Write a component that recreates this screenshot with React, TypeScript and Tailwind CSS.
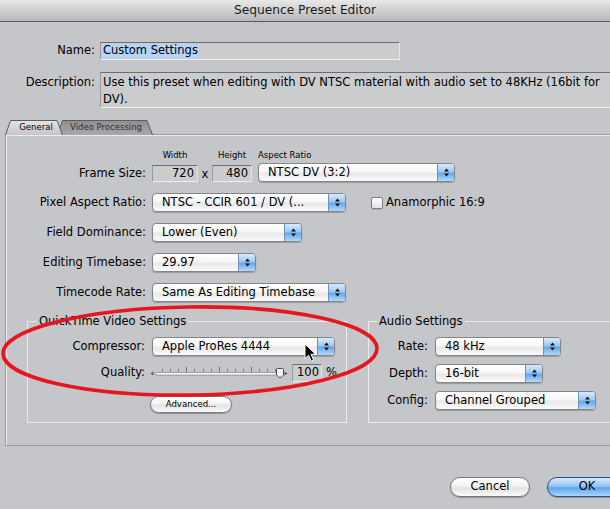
import type { ReactNode } from "react";

const inset =
  "border border-t-[#6e6e6e] border-l-[#9a9a9a] border-r-[#e6e6e6] border-b-[#eeeeee] bg-[#cbccce]";

function Field({ className, children }: { className: string; children?: ReactNode }) {
  return <div className={`flex items-center ${inset} ${className}`}>{children}</div>;
}

function Arrows() {
  return (
    <svg width="7" height="11" viewBox="0 0 7 11">
      <path d="M3.5 1.5 L6 4.5 H1 Z" fill="#111" />
      <path d="M1 6.5 H6 L3.5 9.5 Z" fill="#111" />
    </svg>
  );
}

function PopUp({ label, className }: { label: string; className: string }) {
  return (
    <div
      className={`flex h-[19px] shrink-0 items-center rounded-[4px] border border-[#858585] bg-[linear-gradient(#ffffff,#f7f7f7_45%,#e8e8e8_55%,#fbfbfb)] shadow-[0_1px_1px_rgba(0,0,0,0.22)] ${className}`}
    >
      <span className="flex-1 whitespace-nowrap pl-[9px] leading-[17px]">{label}</span>
      <span className="flex h-full w-[17px] shrink-0 items-center justify-center rounded-r-[3px] border-l border-[#6f8fbd] bg-[linear-gradient(#d8eafc,#9dc9f4_45%,#66a7ec_55%,#b3dafb)]">
        <Arrows />
      </span>
    </div>
  );
}

function Pill({ className, children }: { className: string; children: ReactNode }) {
  return (
    <div
      className={`flex shrink-0 items-center justify-center rounded-full border shadow-[0_1px_1px_rgba(0,0,0,0.25)] ${className}`}
    >
      {children}
    </div>
  );
}

function Slider() {
  const ticks = Array.from({ length: 15 }, (_, i) => Math.round(14 + i * 8.1) + 0.5);
  return (
    <svg width="142" height="18" viewBox="0 0 142 18" className="ml-[3px] shrink-0">
      <path d="M2.5 9.5 L5.5 7.5 V11.5 Z" fill="#5a5a5a" />
      {ticks.map((x, i) => (
        <line key={i} x1={x} x2={x} y1={i % 4 === 3 ? 3 : 5} y2={7.5} stroke="#6e6e6e" strokeWidth="1" />
      ))}
      <rect x="7.5" y="8.5" width="126" height="2.5" rx="1.2" fill="#fdfdfd" stroke="#858585" strokeWidth="0.8" />
      <path
        d="M129.5 4.5 h5 a1 1 0 0 1 1 1 v5.5 l-3.5 3 l-3.5 -3 v-5.5 a1 1 0 0 1 1 -1 z"
        fill="#f4f4f4"
        stroke="#4a4a4a"
      />
      <path d="M139.5 9.5 L136.5 7.5 V11.5 Z" fill="#5a5a5a" />
    </svg>
  );
}

function Row({ label, children }: { label: string; children: ReactNode }) {
  return (
    <div className="mt-[11px] flex h-[19px] items-center">
      <span className="w-[140px] shrink-0 text-right">{label}</span>
      <div className="ml-[6px] flex items-center">{children}</div>
    </div>
  );
}

export default function App() {
  return (
    <div className="relative h-[509px] w-[610px] overflow-hidden bg-[#c5c6ca] font-['DejaVu_Sans',sans-serif] text-[11.5px] text-black">
      <div className="flex h-[22px] items-center justify-center border-b border-[#5a5a5a] bg-[linear-gradient(#e8e8e8,#cbcbcb_60%,#b8b8b8)] text-[12.2px] text-[#1c1c1c]">
        Sequence Preset Editor
      </div>

      <div className="mt-[20px] flex items-center">
        <span className="w-[95px] shrink-0 text-right">Name:</span>
        <Field className="ml-[5px] h-[18px] w-[300px] shrink-0 py-[1px] pl-[1px]">
          <span className="flex h-full items-center bg-[#b4d4fc] px-[1px]">Custom Settings</span>
        </Field>
      </div>

      <div className="mt-[12px] flex items-start">
        <span className="w-[95px] shrink-0 pt-[2px] text-right leading-[17px]">Description:</span>
        <div className="ml-[5px] h-[36px] w-[560px] shrink-0 whitespace-nowrap border-t border-l border-b border-t-[#6e6e6e] border-l-[#9a9a9a] border-b-[#eeeeee] bg-[#cbccce] px-[2px] pt-[1px] leading-[17px]">
          Use this preset when editing with DV NTSC material with audio set to 48KHz (16bit for
          <br />
          DV).
        </div>
      </div>

      <div className="relative z-10 -mb-px mt-[12px] ml-[5px] flex h-[15px]">
        <div className="relative z-10 flex w-[58px] items-center justify-center pl-[4px]">
          <svg className="absolute left-0 top-0" width="58" height="15" viewBox="0 0 58 15">
            <defs>
              <linearGradient id="tabOn" x1="0" y1="0" x2="0" y2="1">
                <stop offset="0" stopColor="#e4e4e6" />
                <stop offset="1" stopColor="#c5c6ca" />
              </linearGradient>
            </defs>
            <path d="M0.5 15 L5.5 0.5 H52 L57.5 15" fill="url(#tabOn)" stroke="#5c5c5c" />
          </svg>
          <span className="relative text-[8.5px] leading-none">General</span>
        </div>
        <div className="relative -ml-[6px] flex w-[96px] items-center justify-center pl-[2px]">
          <svg className="absolute left-0 top-0" width="96" height="15" viewBox="0 0 96 15">
            <defs>
              <linearGradient id="tabOff" x1="0" y1="0" x2="0" y2="1">
                <stop offset="0" stopColor="#8e8e90" />
                <stop offset="1" stopColor="#a9a9ab" />
              </linearGradient>
            </defs>
            <path d="M0.5 15 L5.5 0.5 H90 L95.5 15" fill="url(#tabOff)" stroke="#5c5c5c" />
          </svg>
          <span className="relative text-[8.5px] leading-none text-[#2e2e2e]">Video Processing</span>
        </div>
      </div>

      <div className="ml-[5px] flex h-[312px] w-[640px] flex-col border border-[#9b9b9b] shadow-[inset_1px_1px_0_#ebebeb]">
        <div className="mt-[15px] flex items-end">
          <span className="w-[140px] shrink-0 text-right leading-[17px]">Frame Size:</span>
          <div className="ml-[6px] flex flex-col items-center">
            <span className="h-[10px] text-[8.5px] leading-[10px]">Width</span>
            <Field className="mt-[5px] h-[17px] w-[46px] justify-end pr-[3px]">720</Field>
          </div>
          <span className="w-[14px] text-center leading-[15px]">x</span>
          <div className="flex flex-col items-center">
            <span className="h-[10px] text-[8.5px] leading-[10px]">Height</span>
            <Field className="mt-[5px] h-[17px] w-[40px] justify-end pr-[3px]">480</Field>
          </div>
          <div className="ml-[6px] flex flex-col items-start">
            <span className="h-[10px] text-[8.5px] leading-[10px]">Aspect Ratio</span>
            <PopUp className="mt-[3px] w-[197px]" label="NTSC DV (3:2)" />
          </div>
        </div>

        <Row label="Pixel Aspect Ratio:">
          <PopUp className="w-[194px]" label="NTSC - CCIR 601 / DV (..." />
          <span className="ml-[25px] h-[12px] w-[12px] rounded-[2px] border border-[#7d7d7d] bg-[linear-gradient(#ffffff,#e4e4e4)] shadow-[0_1px_0_rgba(0,0,0,0.12)]" />
          <span className="ml-[3px]">Anamorphic 16:9</span>
        </Row>
        <Row label="Field Dominance:">
          <PopUp className="w-[150px]" label="Lower (Even)" />
        </Row>
        <Row label="Editing Timebase:">
          <PopUp className="w-[104px]" label="29.97" />
        </Row>
        <Row label="Timecode Rate:">
          <PopUp className="w-[194px]" label="Same As Editing Timebase" />
        </Row>

        <div className="mt-[12px] ml-[21px] flex items-stretch">
          <fieldset className="w-[320px] shrink-0 border border-[#ebebeb] pb-[9px]">
            <legend className="ml-[9px] px-[2px] leading-[14px]">QuickTime Video Settings</legend>
            <div className="mt-[9px] flex items-center">
              <span className="w-[117px] shrink-0 text-right">Compressor:</span>
              <PopUp className="ml-[7px] w-[183px]" label="Apple ProRes 4444" />
            </div>
            <div className="mt-[8px] flex h-[18px] items-center">
              <span className="w-[117px] shrink-0 text-right">Quality:</span>
              <Slider />
              <Field className="ml-[2px] h-[18px] w-[30px] justify-end pr-[2px]">100</Field>
              <span className="ml-[4px]">%</span>
            </div>
            <Pill className="mt-[14px] ml-[122px] h-[17px] w-[82px] border-[#7a7a7a] bg-[linear-gradient(#ffffff,#f3f3f3_45%,#e3e3e3_55%,#fafafa)] text-[8.6px]">
              Advanced...
            </Pill>
          </fieldset>

          <fieldset className="ml-[21px] w-[260px] shrink-0 border border-[#ebebeb]">
            <legend className="ml-[8px] px-[2px] leading-[14px]">Audio Settings</legend>
            <div className="mt-[9px] flex items-center">
              <span className="w-[59px] shrink-0 text-right">Rate:</span>
              <PopUp className="ml-[7px] w-[126px]" label="48 kHz" />
            </div>
            <div className="mt-[8px] flex items-center">
              <span className="w-[59px] shrink-0 text-right">Depth:</span>
              <PopUp className="ml-[7px] w-[108px]" label="16-bit" />
            </div>
            <div className="mt-[8px] flex items-center">
              <span className="w-[59px] shrink-0 text-right">Config:</span>
              <PopUp className="ml-[7px] w-[161px]" label="Channel Grouped" />
            </div>
          </fieldset>
        </div>
      </div>

      <div className="mt-[31px] ml-[450px] flex">
        <Pill className="h-[20px] w-[80px] border-[#777777] bg-[linear-gradient(#ffffff,#f3f3f3_45%,#e2e2e2_55%,#fbfbfb)]">
          Cancel
        </Pill>
        <Pill className="ml-[17px] h-[20px] w-[80px] border-[#2f4f86] bg-[linear-gradient(#d6eafc,#94c5f4_45%,#5fa5ec_55%,#aad7fc)]">
          OK
        </Pill>
      </div>

      <svg className="pointer-events-none absolute left-0 top-0" width="610" height="509" viewBox="0 0 610 509">
        <ellipse
          cx="190"
          cy="351"
          rx="187"
          ry="44"
          fill="none"
          stroke="#e5161f"
          strokeWidth="3.6"
          transform="rotate(-0.8 190 351)"
        />
      </svg>

      <svg className="pointer-events-none absolute left-[304px] top-[343px]" width="13" height="20" viewBox="0 0 13 20">
        <path
          d="M1 1 V15.5 L4.6 12.2 L7.2 18.2 L9.6 17.2 L7 11.3 H11.6 Z"
          fill="#000"
          stroke="#fff"
          strokeWidth="1"
          strokeLinejoin="round"
        />
      </svg>
    </div>
  );
}
